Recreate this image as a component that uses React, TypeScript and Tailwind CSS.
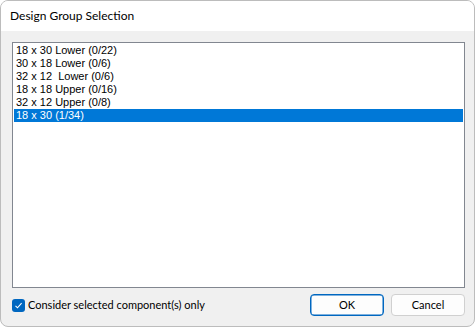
import React from "react";

const items = [
  "18 x 30 Lower (0/22)",
  "30 x 18 Lower (0/6)",
  "32 x 12  Lower (0/6)",
  "18 x 18 Upper (0/16)",
  "32 x 12 Upper (0/8)",
  "18 x 30 (1/34)",
];

const ui = { fontFamily: 'Lato, "Noto Sans", sans-serif' };

export default function App() {
  return (
    <div className="w-[476px] h-[328px] bg-white relative overflow-hidden">
      <div className="w-[475px] h-[327px] border border-[#bcbcbc] rounded-[8px] bg-[#f0f0f0] flex flex-col overflow-hidden">
        <div className="h-[30px] bg-white flex items-center pl-[9px] text-[12px] text-black" style={ui}>
          Design Group Selection
        </div>
        <div className="flex-1 flex flex-col pl-[11px] pr-[9px] pt-[11px]">
          <div
            className="h-[246px] border border-[#828790] bg-white p-[1px] text-[11px] text-black"
            style={{ fontFamily: '"Liberation Sans", Arial, sans-serif' }}
          >
            {items.map((t, i) => (
              <div
                key={i}
                className={
                  "h-[13px] leading-[13px] pl-[2px] whitespace-pre " +
                  (i === 5 ? "bg-[#0078d7] text-white" : "")
                }
              >
                {t}
              </div>
            ))}
          </div>
          <div className="flex items-center mt-[6px]">
            <div className="flex items-center flex-1">
              <div className="w-[13px] h-[13px] rounded-[3px] bg-[#0067c0] flex items-center justify-center">
                <svg width="9" height="9" viewBox="0 0 9 9">
                  <path d="M1.5 4.8 L3.5 6.8 L7.6 2.2" stroke="white" strokeWidth="1.1" fill="none" />
                </svg>
              </div>
              <span className="ml-[3px] text-[11px] text-black" style={ui}>
                Consider selected component(s) only
              </span>
            </div>
            <div className="flex gap-[7px] text-[11px] text-black" style={ui}>
              <button className="w-[74px] h-[22px] rounded-[4px] border border-[#0067c0] shadow-[inset_0_0_0_0.5px_#0067c0] bg-[#fdfdfd] flex items-center justify-center">
                OK
              </button>
              <button className="w-[74px] h-[22px] rounded-[4px] border border-[#d0d0d0] bg-[#fdfdfd] flex items-center justify-center">
                Cancel
              </button>
            </div>
          </div>
        </div>
      </div>
    </div>
  );
}
